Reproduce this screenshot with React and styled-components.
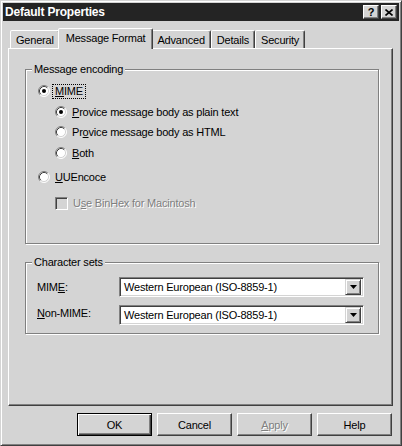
import React from "react";
import styled, { createGlobalStyle } from "styled-components";

const GlobalStyle = createGlobalStyle`
  html, body {
    margin: 0;
    padding: 0;
    background: #d4d4d4;
  }
  body {
    font-family: "Liberation Sans", Arial, sans-serif;
    font-size: 11px;
    letter-spacing: -0.2px;
    color: #000;
  }
`;

const Window = styled.div`
  width: 402px;
  height: 446px;
  box-sizing: border-box;
  background: #d4d4d4;
  border: 1px solid;
  border-color: #d4d4d4 #404040 #404040 #d4d4d4;
  box-shadow: inset 1px 1px 0 #fff, inset -1px -1px 0 #808080;
  padding: 2px;
  display: flex;
  flex-direction: column;
`;

const TitleBar = styled.div`
  height: 18px;
  flex: 0 0 18px;
  background: #242424;
  color: #fff;
  display: flex;
  align-items: center;
  padding: 0 2px 0 2px;
`;

const Title = styled.div`
  flex: 1;
  font-weight: bold;
  font-size: 12px;
  letter-spacing: -0.2px;
`;

const CaptionButton = styled.div`
  width: 16px;
  height: 14px;
  box-sizing: border-box;
  margin-left: ${(p) => p.$gap || 0}px;
  background: #d4d4d4;
  border: 1px solid;
  border-color: #fff #404040 #404040 #fff;
  box-shadow: inset -1px -1px 0 #808080;
  color: #000;
  font-weight: bold;
  font-size: 11px;
  line-height: 12px;
  text-align: center;
  display: flex;
  align-items: center;
  justify-content: center;
`;

const Body = styled.div`
  flex: 1;
  padding: 7px 6px 0 5px;
  display: flex;
  flex-direction: column;
`;

const TabRow = styled.div`
  height: 20px;
  display: flex;
  align-items: flex-end;
  padding-left: 2px;
`;

const Tab = styled.div`
  position: relative;
  box-sizing: border-box;
  height: ${(p) => (p.$active ? 21 : 18)}px;
  margin: 0 ${(p) => (p.$active ? -2 : 0)}px ${(p) => (p.$active ? -1 : 0)}px;
  padding: 3px ${(p) => (p.$active ? 7 : 5)}px 0;
  z-index: ${(p) => (p.$active ? 1 : 0)};
  background: #d4d4d4;
  border: 1px solid;
  border-bottom: none;
  border-color: #fff #404040 transparent #fff;
  box-shadow: inset -1px 0 0 #808080;
  border-radius: 2px 2px 0 0;
  line-height: 12px;
  white-space: nowrap;
`;

const Panel = styled.div`
  height: 358px;
  box-sizing: border-box;
  border: 1px solid;
  border-color: #fff #404040 #404040 #fff;
  box-shadow: inset -1px -1px 0 #808080;
  padding: 14px 13px 0 16px;
`;

const Group = styled.fieldset`
  margin: ${(p) => p.$top || 0}px 0 0;
  padding: ${(p) => p.$padTop}px 6px 0;
  height: ${(p) => p.$height}px;
  box-sizing: border-box;
  border: 1px solid #808080;
  box-shadow: inset 1px 1px 0 #fff, 1px 1px 0 #fff;
  min-width: 0;
`;

const Legend = styled.legend`
  padding: 0 2px;
  margin-left: 0;
  line-height: 13px;
  background: #d4d4d4;
`;

const OptionList = styled.div`
  display: flex;
  flex-direction: column;
  padding-left: 6px;
`;

const Option = styled.div`
  display: flex;
  align-items: center;
  height: 16px;
  margin-top: ${(p) => p.$gap || 0}px;
  margin-left: ${(p) => (p.$sub ? 17 : 0)}px;
  color: ${(p) => (p.$disabled ? "#808080" : "#000")};
  text-shadow: ${(p) => (p.$disabled ? "1px 1px 0 #fff" : "none")};
`;

const Label = styled.span`
  padding: 0 2px;
  margin-left: 3px;
  line-height: 13px;
  outline: ${(p) => (p.$focus ? "1px dotted #000" : "none")};
  outline-offset: 0;
  white-space: nowrap;
`;

const Key = styled.span`
  text-decoration: underline;
`;

const CheckBox = styled.span`
  width: 13px;
  height: 13px;
  box-sizing: border-box;
  background: #d4d4d4;
  border: 1px solid;
  border-color: #808080 #fff #fff #808080;
  box-shadow: inset 1px 1px 0 #404040, inset -1px -1px 0 #d4d4d4;
  text-shadow: none;
`;

const CharsetGrid = styled.div`
  display: grid;
  grid-template-columns: 82px 245px;
  grid-auto-rows: 20px;
  row-gap: 8px;
  align-items: center;
  padding-left: 5px;
`;

const FieldLabel = styled.span`
  white-space: nowrap;
  margin-top: ${(p) => p.$shift || 0}px;
`;

const Combo = styled.div`
  height: 20px;
  box-sizing: border-box;
  background: #fff;
  border: 1px solid;
  border-color: #808080 #fff #fff #808080;
  box-shadow: inset 1px 1px 0 #404040, inset -1px -1px 0 #d4d4d4;
  display: flex;
  align-items: center;
  padding: 2px;
`;

const ComboText = styled.span`
  flex: 1;
  padding-left: 2px;
  white-space: nowrap;
`;

const DropButton = styled.span`
  width: 16px;
  height: 16px;
  box-sizing: border-box;
  background: #d4d4d4;
  border: 1px solid;
  border-color: #d4d4d4 #404040 #404040 #d4d4d4;
  box-shadow: inset 1px 1px 0 #fff, inset -1px -1px 0 #808080;
  display: flex;
  align-items: center;
  justify-content: center;
`;

const ButtonRow = styled.div`
  display: flex;
  justify-content: flex-end;
  gap: 5px;
  margin-top: 7px;
  padding-right: 1px;
`;

const Button = styled.button`
  width: 75px;
  height: 23px;
  box-sizing: border-box;
  padding: 0;
  font: inherit;
  letter-spacing: inherit;
  background: #d4d4d4;
  color: ${(p) => (p.disabled ? "#808080" : "#000")};
  text-shadow: ${(p) => (p.disabled ? "1px 1px 0 #fff" : "none")};
  border: 1px solid;
  border-color: ${(p) =>
    p.$default ? "#000" : "#fff #404040 #404040 #fff"};
  box-shadow: ${(p) =>
    p.$default
      ? "inset 1px 1px 0 #fff, inset -1px -1px 0 #404040, inset -2px -2px 0 #808080"
      : "inset -1px -1px 0 #808080"};
`;

const Radio = ({ checked }) => (
  <svg width="12" height="12" viewBox="0 0 12 12" style={{ flex: "0 0 12px" }}>
    <circle cx="6" cy="6" r="5" fill="#fff" />
    <path d="M2.11 9.89 A5.5 5.5 0 0 1 9.89 2.11" stroke="#808080" fill="none" />
    <path d="M2.82 9.18 A4.5 4.5 0 0 1 9.18 2.82" stroke="#404040" fill="none" />
    <path d="M9.89 2.11 A5.5 5.5 0 0 1 2.11 9.89" stroke="#fff" fill="none" />
    <path d="M9.18 2.82 A4.5 4.5 0 0 1 2.82 9.18" stroke="#d4d4d4" fill="none" />
    {checked && <circle cx="6" cy="6" r="2" fill="#000" />}
  </svg>
);

const Arrow = () => (
  <svg width="7" height="4" viewBox="0 0 7 4">
    <polygon points="0,0 7,0 3.5,4" fill="#000" />
  </svg>
);

const CloseGlyph = () => (
  <svg width="8" height="7" viewBox="0 0 8 7">
    <path d="M0.5 0.5 L7.5 6.5 M7.5 0.5 L0.5 6.5" stroke="#000" strokeWidth="1.6" />
  </svg>
);

const tabs = ["General", "Message Format", "Advanced", "Details", "Security"];

export default function App() {
  return (
    <>
      <GlobalStyle />
      <Window>
        <TitleBar>
          <Title>Default Properties</Title>
          <CaptionButton>?</CaptionButton>
          <CaptionButton $gap={2}>
            <CloseGlyph />
          </CaptionButton>
        </TitleBar>
        <Body>
          <TabRow>
            {tabs.map((t) => (
              <Tab key={t} $active={t === "Message Format"}>
                {t}
              </Tab>
            ))}
          </TabRow>
          <Panel>
            <Group $height={181} $padTop={7}>
              <Legend>Message encoding</Legend>
              <OptionList>
                <Option>
                  <Radio checked />
                  <Label $focus>
                    <Key>M</Key>IME
                  </Label>
                </Option>
                <Option $sub $gap={5}>
                  <Radio checked />
                  <Label>
                    <Key>P</Key>rovice message body as plain text
                  </Label>
                </Option>
                <Option $sub $gap={4}>
                  <Radio />
                  <Label>
                    Pr<Key>o</Key>vice message body as HTML
                  </Label>
                </Option>
                <Option $sub $gap={5}>
                  <Radio />
                  <Label>
                    <Key>B</Key>oth
                  </Label>
                </Option>
                <Option $gap={8}>
                  <Radio />
                  <Label>
                    <Key>U</Key>UEncoce
                  </Label>
                </Option>
                <Option $sub $gap={10} $disabled>
                  <CheckBox />
                  <Label>
                    U<Key>s</Key>e BinHex for Macintosh
                  </Label>
                </Option>
              </OptionList>
            </Group>
            <Group $top={12} $height={78} $padTop={8}>
              <Legend>Character sets</Legend>
              <CharsetGrid>
                <FieldLabel>
                  MIM<Key>E</Key>:
                </FieldLabel>
                <Combo>
                  <ComboText>Western European (ISO-8859-1)</ComboText>
                  <DropButton>
                    <Arrow />
                  </DropButton>
                </Combo>
                <FieldLabel $shift={-4}>
                  <Key>N</Key>on-MIME:
                </FieldLabel>
                <Combo>
                  <ComboText>Western European (ISO-8859-1)</ComboText>
                  <DropButton>
                    <Arrow />
                  </DropButton>
                </Combo>
              </CharsetGrid>
            </Group>
          </Panel>
          <ButtonRow>
            <Button $default>OK</Button>
            <Button>Cancel</Button>
            <Button disabled>
              <Key>A</Key>pply
            </Button>
            <Button>Help</Button>
          </ButtonRow>
        </Body>
      </Window>
    </>
  );
}
